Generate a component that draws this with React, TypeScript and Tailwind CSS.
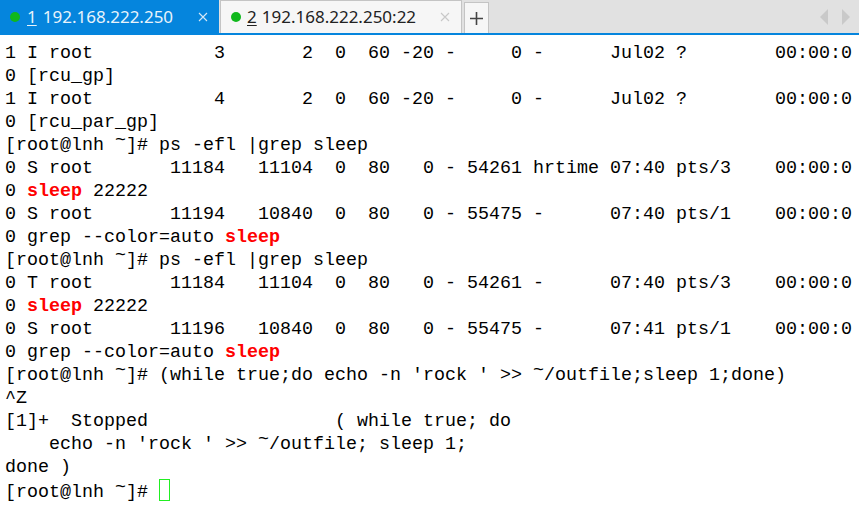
import React from 'react';

const Hit = ({ children }: { children: React.ReactNode }) => (
  <span className="font-bold text-[#ff0000]">{children}</span>
);

// the tilde sits high in the reference's terminal font
const Tilde = () => <span className="align-[5px] leading-[0]">~</span>;

function Tab({ num, label, active }: { num: string; label: string; active?: boolean }) {
  return (
    <div
      className={
        active
          ? 'flex h-[33px] w-[219px] items-center bg-[#0585dd] pl-[10px] text-[#e8f3fb]'
          : 'ml-[1px] flex h-[33px] w-[242px] items-center border-x border-t border-[#c4c4c4] bg-[#f6f6f6] pl-[10px] text-[#222222]'
      }
    >
      <span className="h-[10px] w-[10px] rounded-full bg-[#10b81c]" />
      <span className={active ? 'ml-[7px] underline underline-offset-2' : 'ml-[6px] underline underline-offset-2'}>{num}</span>
      <span className={active ? 'ml-[6px]' : 'ml-[5px]'}>{label}</span>
      <span className={active ? 'ml-auto mr-[11px] text-[#d5e8f6]' : 'ml-auto mr-[11px] text-[#c8c8c8]'}>
        <svg width="10" height="10" viewBox="0 0 10 10" fill="none" stroke="currentColor" strokeWidth="1.1">
          <path d="M1 1l8 8M9 1l-8 8" />
        </svg>
      </span>
    </div>
  );
}

export default function App() {
  return (
    <div className="h-[512px] w-[859px] overflow-hidden bg-white">
      {/* Tab strip */}
      <div className="flex h-[35px] border-b-2 border-[#0585dd] bg-[#e1e1e1] font-['Noto_Sans',sans-serif] text-[17px]">
        <Tab num="1" label="192.168.222.250" active />
        <Tab num="2" label="192.168.222.250:22" />
        <div className="ml-[2px] mt-[2px] flex h-[31px] w-[25px] items-center justify-center self-start border-x border-t border-[#c4c4c4] bg-[#f6f6f6]">
          <svg width="13" height="13" viewBox="0 0 13 13" fill="none" stroke="#444444" strokeWidth="1.6">
            <path d="M6.5 0v13M0 6.5h13" />
          </svg>
        </div>
        <div className="ml-auto mr-[7px] flex h-[33px] items-center gap-[10px]">
          <svg width="11" height="16" viewBox="0 0 11 16" fill="#c9c9c9">
            <path d="M8 0v16L0 8z" />
          </svg>
          <svg width="11" height="16" viewBox="0 0 11 16" fill="#c9c9c9">
            <path d="M1 0v16l8-8z" />
          </svg>
        </div>
      </div>

      {/* Terminal output */}
      <pre className="pl-[5px] pt-[7px] font-['Liberation_Mono',monospace] text-[18.33px] leading-[23px] text-black">
        <div>1 I root           3       2  0  60 -20 -     0 -      Jul02 ?        00:00:0</div>
        <div>0 [rcu_gp]</div>
        <div>1 I root           4       2  0  60 -20 -     0 -      Jul02 ?        00:00:0</div>
        <div>0 [rcu_par_gp]</div>
        <div>[root@lnh <Tilde />]# ps -efl |grep sleep</div>
        <div>0 S root       11184   11104  0  80   0 - 54261 hrtime 07:40 pts/3    00:00:0</div>
        <div>0 <Hit>sleep</Hit> 22222</div>
        <div>0 S root       11194   10840  0  80   0 - 55475 -      07:40 pts/1    00:00:0</div>
        <div>0 grep --color=auto <Hit>sleep</Hit></div>
        <div>[root@lnh <Tilde />]# ps -efl |grep sleep</div>
        <div>0 T root       11184   11104  0  80   0 - 54261 -      07:40 pts/3    00:00:0</div>
        <div>0 <Hit>sleep</Hit> 22222</div>
        <div>0 S root       11196   10840  0  80   0 - 55475 -      07:41 pts/1    00:00:0</div>
        <div>0 grep --color=auto <Hit>sleep</Hit></div>
        <div>[root@lnh <Tilde />]# (while true;do echo -n 'rock ' &gt;&gt; <Tilde />/outfile;sleep 1;done)</div>
        <div>^Z</div>
        <div>[1]+  Stopped                 ( while true; do</div>
        <div>    echo -n 'rock ' &gt;&gt; <Tilde />/outfile; sleep 1;</div>
        <div>done )</div>
        <div className="flex items-center">
          <span>[root@lnh <Tilde />]# </span>
          <span className="mb-[4px] h-[22px] w-[11px] border border-[#22ee22]" />
        </div>
      </pre>
    </div>
  );
}
